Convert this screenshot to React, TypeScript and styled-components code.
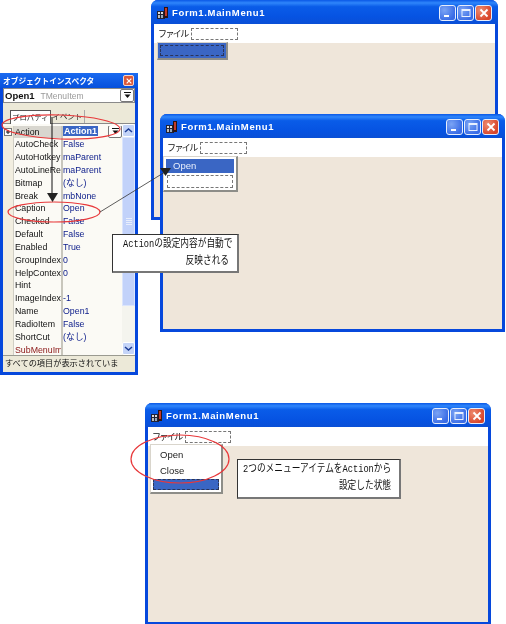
import React from "react";
import styled, { createGlobalStyle, css } from "styled-components";

const GlobalStyle = createGlobalStyle`
  html, body { margin: 0; padding: 0; background: #fff; }
  body { font-family: "Liberation Sans", "Noto Sans CJK JP", sans-serif; }
`;

const Canvas = styled.div`
  position: relative;
  width: 506px;
  height: 624px;
  overflow: hidden;
  background: #fff;
  filter: blur(0.3px);
`;

/* form windows */
const Win = styled.div<{ $x: number; $y: number; $w: number; $h: number }>`
  position: absolute;
  left: ${(p) => p.$x}px;
  top: ${(p) => p.$y}px;
  width: ${(p) => p.$w}px;
  height: ${(p) => p.$h}px;
  box-sizing: border-box;
  display: flex;
  flex-direction: column;
  border: 3px solid #0648dc;
  border-top: 0;
  border-radius: 7px 7px 0 0;
  background: #0648dc;
`;

const TitleBar = styled.div`
  flex: none;
  height: 24px;
  box-sizing: border-box;
  margin: 0 -3px;
  padding: 1px 6px 0 5px;
  display: flex;
  align-items: center;
  gap: 2px;
  border-radius: 7px 7px 0 0;
  background: linear-gradient(180deg, #0a58e6 0%, #2f86fb 12%, #0a5ce8 28%, #0653e2 70%, #0a4fd6 100%);
`;

const TitleText = styled.span`
  flex: 1;
  color: #fff;
  font-size: 9.5px;
  font-weight: 700;
  letter-spacing: 0.65px;
  white-space: nowrap;
`;

const CapButtons = styled.div`
  display: flex;
  gap: 1px;
`;

const CapBtn = styled.div<{ $close?: boolean }>`
  width: 17px;
  height: 16px;
  box-sizing: border-box;
  border: 1px solid #e6edfc;
  border-radius: 3px;
  display: flex;
  align-items: center;
  justify-content: center;
  background: ${(p) =>
    p.$close
      ? "radial-gradient(circle at 30% 30%, #ee8c70, #d8452a 75%)"
      : "radial-gradient(circle at 30% 30%, #7ba4f4, #3a6ce6 75%)"};
`;

const MenuBar = styled.div`
  flex: none;
  height: 19px;
  padding-left: 4px;
  display: flex;
  align-items: center;
  gap: 3px;
  background: #fff;
  color: #111;
`;

const MenuLabel = styled.span`
  letter-spacing: -1.6px;
  font-size: 9px;
`;

const DashedSlot = styled.div<{ $w: number }>`
  width: ${(p) => p.$w}px;
  height: 12px;
  box-sizing: border-box;
  border: 1px dashed #777;
  background: #fff;
`;

const Client = styled.div`
  flex: 1;
  position: relative;
  background: #efe6da;
`;

const Drop = styled.div<{ $x: number; $y: number; $w: number; $h: number; $flat?: boolean }>`
  position: absolute;
  left: ${(p) => p.$x}px;
  top: ${(p) => p.$y}px;
  width: ${(p) => p.$w}px;
  height: ${(p) => p.$h}px;
  box-sizing: border-box;
  padding: 2px;
  display: flex;
  flex-direction: column;
  background: ${(p) => (p.$flat ? "#3a66c4" : "#fff")};
  border-right: 2px solid #8d8d88;
  border-bottom: 2px solid #8d8d88;
  border-left: 1px solid #d9d5cc;
  border-top: 1px solid #d9d5cc;
`;

const DropActive = styled.div`
  height: 15px;
  padding-left: 7px;
  display: flex;
  align-items: center;
  background: #3a66c4;
  color: #e8eefc;
  font-size: 9.5px;
`;

const DropSlot = styled.div`
  margin: 2px 1px 0;
  height: 12px;
  border: 1px dashed #777;
`;

const FocusSlot = styled.div`
  flex: 1;
  border: 1px dashed #2a3458;
`;

const DropList = styled.div`
  margin-top: -1px;
`;

const DropItem = styled.div`
  height: 16px;
  padding-left: 7px;
  display: flex;
  align-items: center;
  font-size: 9.5px;
  color: #222;
`;

const BottomBlock = styled.div`
  height: 13px;
  margin-top: 1px;
  background: #3a66c4;
  border: 1px dashed #2a3458;
`;

/* callouts */
const Callout = styled.div<{ $x: number; $y: number; $w: number; $h: number; $pl: number }>`
  position: absolute;
  left: ${(p) => p.$x}px;
  top: ${(p) => p.$y}px;
  width: ${(p) => p.$w}px;
  height: ${(p) => p.$h}px;
  box-sizing: border-box;
  padding: 2px 8px 0 ${(p) => p.$pl}px;
  border: 1px solid #333;
  border-right: 2px solid #777;
  border-bottom: 2px solid #777;
  background: #fff;
  font-family: "Liberation Mono", "Noto Sans CJK JP", monospace;
  font-size: 8.7px;
  line-height: 17px;
  color: #111;
  z-index: 5;
`;

const CalloutLine = styled.div<{ $right?: boolean }>`
  white-space: nowrap;
  text-align: ${(p) => (p.$right ? "right" : "left")};
  transform: scaleY(1.25);
`;

/* object inspector */
const Inspector = styled.div`
  position: absolute;
  left: 0;
  top: 73px;
  width: 138px;
  height: 302px;
  box-sizing: border-box;
  display: flex;
  flex-direction: column;
  border: 3px solid #0648dc;
  border-top: 0;
  background: #ece9d8;
`;

const InsTitle = styled.div`
  flex: none;
  height: 15px;
  margin: 0 -3px;
  padding: 0 3px;
  display: flex;
  align-items: center;
  justify-content: space-between;
  background: linear-gradient(180deg, #1a6af0, #0650dc);
  color: #fff;
  font-size: 7.7px;
  font-weight: 700;
  white-space: nowrap;
`;

const InsClose = styled.div`
  width: 11px;
  height: 11px;
  box-sizing: border-box;
  border: 1px solid #f4d8cc;
  border-radius: 2px;
  background: #dc5a3a;
  display: flex;
  align-items: center;
  justify-content: center;
  margin-right: 1px;
`;

const Combo = styled.div`
  flex: none;
  height: 15px;
  box-sizing: border-box;
  border: 1px solid #8a8a8a;
  background: #fff;
  display: flex;
  align-items: center;
  font-size: 8.5px;
  padding-left: 1px;
  gap: 6px;
  b { color: #111; font-size: 9.5px; }
  span { color: #999; flex: 1; }
`;

const ComboBtn = styled.div`
  width: 14px;
  height: 13px;
  box-sizing: border-box;
  border: 1px solid #777;
  border-radius: 2px;
  background: #fff;
  display: flex;
  align-items: center;
  justify-content: center;
`;

const Tabs = styled.div`
  flex: none;
  height: 21px;
  box-sizing: border-box;
  padding: 7px 0 0 7px;
  display: flex;
  border-bottom: 1px solid #8a8a8a;
`;

const Tab = styled.div<{ $on?: boolean }>`
  height: 13px;
  padding: 0 1px;
  font-size: 7.4px;
  line-height: 13px;
  white-space: nowrap;
  color: #222;
  ${(p) =>
    p.$on
      ? css`
          border: 1px solid #555;
          border-bottom: 0;
          background: #fff;
        `
      : css`
          margin-left: 1px;
          padding-right: 2px;
          border-right: 1px solid #aaa;
          background: #ece9d8;
        `}
`;

const GridWrap = styled.div`
  flex: 1;
  min-height: 0;
  display: flex;
  background: #fbfaf5;
`;

const Rows = styled.div`
  flex: 1;
  min-width: 0;
  padding-top: 1.5px;
  overflow: hidden;
`;

const PropRow = styled.div`
  height: 12.83px;
  display: grid;
  grid-template-columns: 11px 49px 1fr;
  font-size: 8.8px;
  line-height: 13px;
`;

const Gutter = styled.div`
  background: #f2eee0;
  border-right: 1px solid #d0cec4;
  display: flex;
  align-items: center;
  justify-content: center;
`;

const PropName = styled.div<{ $sel?: boolean; $red?: boolean }>`
  padding-left: 1px;
  overflow: hidden;
  white-space: nowrap;
  border-right: 2px solid #c8c6bc;
  color: ${(p) => (p.$red ? "#8a1414" : "#111")};
  background: ${(p) => (p.$sel ? "#d8d6cf" : "#fbfaf5")};
`;

const PropVal = styled.div`
  white-space: nowrap;
  overflow: hidden;
  color: #10208c;
  display: flex;
  align-items: center;
`;

const SelVal = styled.span`
  flex: 1;
  b {
    background: #3a66c4;
    color: #fff;
    font-size: 9px;
    padding: 0 1px;
  }
`;

const ScrollBar = styled.div`
  flex: none;
  width: 13px;
  display: flex;
  flex-direction: column;
  background: #f4f4ee;
`;

const ScrollBtn = styled.div`
  flex: none;
  height: 13px;
  box-sizing: border-box;
  border: 1px solid #fff;
  border-radius: 2px;
  background: #c4d4f8;
  display: flex;
  align-items: center;
  justify-content: center;
`;

const ScrollThumb = styled.div`
  flex: none;
  height: 169px;
  box-sizing: border-box;
  display: flex;
  align-items: center;
  justify-content: center;
  background: #c2d2fa;
  border: 1px solid #dbe5fc;
`;

const ThumbGrip = styled.div`
  width: 6px;
  height: 7px;
  background: repeating-linear-gradient(180deg, #e8eefc 0 1px, transparent 1px 2px);
`;

const ScrollRest = styled.div`
  flex: 1;
`;

const Status = styled.div`
  flex: none;
  height: 17px;
  box-sizing: border-box;
  padding: 1px 0 0 2px;
  border-top: 1px solid #9a9a90;
  background: #ece9d8;
  font-size: 8.2px;
  line-height: 13px;
  white-space: nowrap;
  overflow: hidden;
  color: #111;
`;

const Overlay = styled.svg`
  position: absolute;
  left: 0;
  top: 0;
  z-index: 4;
  pointer-events: none;
`;

const AppIcon = () => (
  <svg width="14" height="14" viewBox="0 0 14 14">
    <rect x="1" y="5" width="8" height="8" fill="#223" />
    <rect x="2" y="6" width="2" height="2" fill="#ddd" />
    <rect x="5" y="6" width="2" height="2" fill="#ddd" />
    <rect x="2" y="9" width="2" height="3" fill="#bbb" />
    <rect x="5" y="9" width="2" height="3" fill="#9ab" />
    <rect x="8" y="1" width="4" height="11" fill="#2a1414" />
    <rect x="9" y="2" width="2" height="8" fill="#c23a2a" />
  </svg>
);

const MinIcon = () => (
  <svg width="12" height="12" viewBox="0 0 12 12">
    <rect x="2" y="8" width="5" height="2" fill="#fff" />
  </svg>
);

const MaxIcon = () => (
  <svg width="12" height="12" viewBox="0 0 12 12">
    <rect x="2" y="2.5" width="8" height="7" fill="none" stroke="#e8f0ff" strokeWidth="1" />
    <rect x="2" y="2" width="8" height="2" fill="#e8f0ff" />
  </svg>
);

const CloseIcon = ({ size = 12 }: { size?: number }) => (
  <svg width={size} height={size} viewBox="0 0 12 12">
    <path d="M2.5 2.5L9.5 9.5M9.5 2.5L2.5 9.5" stroke="#fff" strokeWidth="1.8" />
  </svg>
);

const DownTri = () => (
  <svg width="9" height="9" viewBox="0 0 9 9">
    <rect x="1" y="1" width="7" height="1" fill="#111" />
    <path d="M1.5 3.5H7.5L4.5 7Z" fill="#111" />
  </svg>
);

const ChevUp = () => (
  <svg width="9" height="7" viewBox="0 0 9 7">
    <path d="M1 5L4.5 2L8 5" fill="none" stroke="#1c3c94" strokeWidth="1.5" />
  </svg>
);

const ChevDown = () => (
  <svg width="9" height="7" viewBox="0 0 9 7">
    <path d="M1 2L4.5 5L8 2" fill="none" stroke="#1c3c94" strokeWidth="1.5" />
  </svg>
);

const Plus = () => (
  <svg width="8" height="8" viewBox="0 0 8 8">
    <rect x="0.5" y="0.5" width="7" height="7" fill="#fff" stroke="#777" />
    <path d="M2 4H6M4 2V6" stroke="#111" />
  </svg>
);

function FormWindow(props: { x: number; y: number; w: number; h: number; slot: number; children?: React.ReactNode }) {
  return (
    <Win $x={props.x} $y={props.y} $w={props.w} $h={props.h}>
      <TitleBar>
        <AppIcon />
        <TitleText>Form1.MainMenu1</TitleText>
        <CapButtons>
          <CapBtn><MinIcon /></CapBtn>
          <CapBtn><MaxIcon /></CapBtn>
          <CapBtn $close><CloseIcon /></CapBtn>
        </CapButtons>
      </TitleBar>
      <MenuBar>
        <MenuLabel>ファイル</MenuLabel>
        <DashedSlot $w={props.slot} />
      </MenuBar>
      <Client>{props.children}</Client>
    </Win>
  );
}

const rows: [string, string][] = [
  ["AutoCheck", "False"],
  ["AutoHotkey", "maParent"],
  ["AutoLineRec", "maParent"],
  ["Bitmap", "(なし)"],
  ["Break", "mbNone"],
  ["Caption", "Open"],
  ["Checked", "False"],
  ["Default", "False"],
  ["Enabled", "True"],
  ["GroupIndex", "0"],
  ["HelpContext", "0"],
  ["Hint", ""],
  ["ImageIndex", "-1"],
  ["Name", "Open1"],
  ["RadioItem", "False"],
  ["ShortCut", "(なし)"],
  ["SubMenuIm", ""],
];

export default function App() {
  return (
    <Canvas>
      <GlobalStyle />

      <FormWindow x={151} y={0} w={347} h={220} slot={47}>
        <Drop $x={3} $y={-1} $w={71} $h={18} $flat>
          <FocusSlot />
        </Drop>
      </FormWindow>

      <FormWindow x={160} y={114} w={345} h={218} slot={47}>
        <Drop $x={0} $y={-1} $w={75} $h={36}>
          <DropActive>Open</DropActive>
          <DropSlot />
        </Drop>
      </FormWindow>

      <FormWindow x={145} y={403} w={346} h={222} slot={46}>
        <Drop $x={2} $y={-2} $w={73} $h={50}>
          <DropList>
            <DropItem>Open</DropItem>
            <DropItem>Close</DropItem>
          </DropList>
          <BottomBlock />
        </Drop>
      </FormWindow>

      <Inspector>
        <InsTitle>
          <span>オブジェクトインスペクタ</span>
          <InsClose><CloseIcon size={8} /></InsClose>
        </InsTitle>
        <Combo>
          <b>Open1</b>
          <span>TMenuItem</span>
          <ComboBtn><DownTri /></ComboBtn>
        </Combo>
        <Tabs>
          <Tab $on>プロパティ</Tab>
          <Tab>イベント</Tab>
        </Tabs>
        <GridWrap>
          <Rows>
            <PropRow>
              <Gutter><Plus /></Gutter>
              <PropName $sel>Action</PropName>
              <PropVal>
                <SelVal><b>Action1</b></SelVal>
                <ComboBtn><DownTri /></ComboBtn>
              </PropVal>
            </PropRow>
            {rows.map(([name, value]) => (
              <PropRow key={name}>
                <Gutter />
                <PropName $red={name === "SubMenuIm"}>{name}</PropName>
                <PropVal>{value}</PropVal>
              </PropRow>
            ))}
          </Rows>
          <ScrollBar>
            <ScrollBtn><ChevUp /></ScrollBtn>
            <ScrollThumb><ThumbGrip /></ScrollThumb>
            <ScrollRest />
            <ScrollBtn><ChevDown /></ScrollBtn>
          </ScrollBar>
        </GridWrap>
        <Status>すべての項目が表示されていま</Status>
      </Inspector>

      <Overlay width="506" height="624" viewBox="0 0 506 624">
        <ellipse cx="61" cy="127" rx="59" ry="12" fill="none" stroke="#e8383a" strokeWidth="1.2" transform="rotate(2 61 127)" />
        <ellipse cx="54" cy="212" rx="46" ry="10" fill="none" stroke="#e8383a" strokeWidth="1.2" />
        <ellipse cx="180" cy="459" rx="49" ry="24" fill="none" stroke="#e8383a" strokeWidth="1.2" />
        <path d="M52 117V194" stroke="#111" strokeWidth="1" />
        <path d="M47 193H58L52.5 202Z" fill="#222" />
        <path d="M100 212L165 172" stroke="#333" strokeWidth="0.8" />
        <path d="M160 168H171L165.5 176Z" fill="#222" />
      </Overlay>

      <Callout $x={112} $y={234} $w={127} $h={39} $pl={10}>
        <CalloutLine>Actionの設定内容が自動で</CalloutLine>
        <CalloutLine $right>反映される</CalloutLine>
      </Callout>
      <Callout $x={237} $y={459} $w={164} $h={40} $pl={5}>
        <CalloutLine>2つのメニューアイテムをActionから</CalloutLine>
        <CalloutLine $right>設定した状態</CalloutLine>
      </Callout>
    </Canvas>
  );
}
